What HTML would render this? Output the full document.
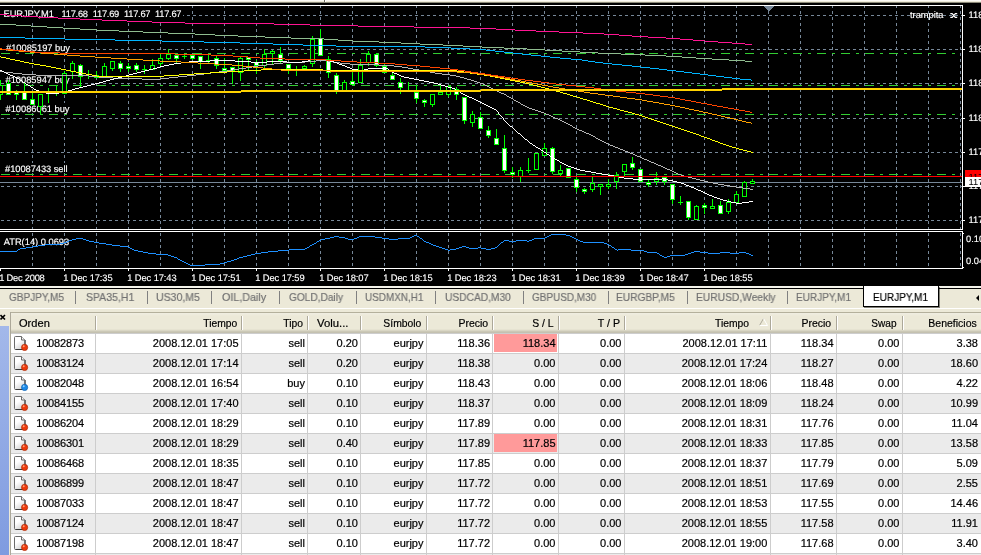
<!DOCTYPE html>
<html><head><meta charset="utf-8"><title>EURJPY,M1</title>
<style>
html,body{margin:0;padding:0}
body{width:981px;height:555px;overflow:hidden;position:relative;background:#ece9d8;font-family:"Liberation Sans",sans-serif;font-size:11px;color:#000}
.tabs{position:absolute;left:0;top:289px;width:981px;height:19px;background:#ece9d8}
.tb{position:absolute;top:1px;height:19px;line-height:14px;color:#727272;-webkit-text-stroke:0.2px #727272;white-space:nowrap;transform-origin:0 0;will-change:transform}
.sp{position:absolute;top:2px;width:1px;height:13px;background:#808080}
.act{position:absolute;left:863px;top:-3px;width:74px;height:20px;background:#fff;border:1px solid #000;border-top:none;box-sizing:content-box;box-shadow:1px 1px 0 rgba(0,0,0,.45)}
.act .tb{top:4px;will-change:transform}
.arr{position:absolute;left:975.5px;top:5.5px;width:0;height:0;border-top:3.5px solid transparent;border-bottom:3.5px solid transparent;border-right:3.5px solid #000}
.hl{position:absolute;left:0;top:308px;width:981px;height:1px;background:#fff}
.side{position:absolute;left:0;top:326px;width:9px;height:229px;background:linear-gradient(#a3b8ea,#7f9be0)}
.cx{position:absolute;left:0;top:314px;width:7px;height:7px;line-height:0}
.hd{position:absolute;left:10px;top:312px;width:971px;height:21px;background:linear-gradient(#b4b09c 0,#b4b09c 1px,#f0eee2 1px,#ece9d8 4px,#ece9d8 17px,#e0ddcb 18px,#d2cfbd 19px,#c4c1b0 20px,#c4c1b0 21px)}
.hd span{position:absolute;top:0;line-height:22px;white-space:nowrap;-webkit-text-stroke:0.2px #000}
.hd i{position:absolute;top:4px;width:1px;height:14px;background:#aca899;box-shadow:1px 0 0 #fff}
.rw{position:absolute;left:11px;width:970px;height:20px;box-sizing:border-box;border-top:1px solid #cdcdcd}
.rw span{position:absolute;top:0;line-height:18px;white-space:nowrap;-webkit-text-stroke:0.2px #000}
.ic{position:absolute;left:3px;top:1px}
.pk{position:absolute;left:483px;top:0;width:63px;height:18px;background:#ff9a9a}
.cl{position:absolute;top:333px;width:1px;height:222px;background:#cdcdcd}
.lb{position:absolute;left:10px;top:312px;width:1px;height:243px;background:#aca899}
</style></head><body>
<svg width="981" height="289" viewBox="0 0 981 289" shape-rendering="crispEdges" style="position:absolute;left:0;top:0;will-change:transform;font-family:'Liberation Sans',sans-serif;font-size:9.33px">
<rect x="0" y="0" width="981" height="1" fill="#fbfaf5"/><rect x="0" y="1" width="981" height="1" fill="#ece9d8"/><rect x="0" y="2" width="981" height="1" fill="#8a8878"/>
<rect x="324" y="0" width="1" height="2" fill="#6b6a60"/><rect x="325" y="0" width="1" height="2" fill="#fff"/>
<rect x="0" y="3" width="981" height="283" fill="#000"/>
<rect x="0" y="286" width="981" height="2" fill="#f4f3ea"/>
<rect x="0" y="288" width="981" height="1" fill="#000"/>
<path d="M32.5 5V268M64.5 5V268M96.5 5V268M128.5 5V268M160.5 5V268M192.5 5V268M224.5 5V268M256.5 5V268M288.5 5V268M320.5 5V268M352.5 5V268M384.5 5V268M416.5 5V268M448.5 5V268M480.5 5V268M512.5 5V268M544.5 5V268M576.5 5V268M608.5 5V268M640.5 5V268M672.5 5V268M704.5 5V268M736.5 5V268M768.5 5V268M800.5 5V268M832.5 5V268M864.5 5V268M896.5 5V268M928.5 5V268M960.5 5V268" stroke="#778899" stroke-width="1" stroke-dasharray="3 3" fill="none"/>
<path d="M1 15.5H962M1 49.5H962M1 83.5H962M1 118.5H962M1 152.5H962M1 186.5H962M1 220.5H962" stroke="#778899" stroke-width="1" stroke-dasharray="3 3" fill="none"/>
<path d="M764 6h10l-5 6z" fill="#778899"/>
<path d="M1 53.5H960M1 85.5H960M1 114.5H960M1 174.5H960" stroke="#32cd32" stroke-width="1" stroke-dasharray="9 6 3 6" fill="none"/>
<rect x="0" y="182" width="962" height="1" fill="#778899"/>
<rect x="0" y="9" width="183" height="11" fill="#000"/>
<rect x="4" y="42" width="68" height="10" fill="#000"/>
<rect x="4" y="74" width="68" height="10" fill="#000"/>
<rect x="4" y="103" width="68" height="10" fill="#000"/>
<rect x="4" y="163" width="66" height="10" fill="#000"/>
<g fill="#fff" stroke="#fff" stroke-width="0.15" shape-rendering="auto" text-rendering="geometricPrecision">
<text x="3.5" y="17" textLength="50.5">EURJPY,M1</text>
<text x="61.5" y="17" textLength="26.5">117.68</text>
<text x="92.8" y="17" textLength="26.5">117.69</text>
<text x="124.0" y="17" textLength="26.5">117.67</text>
<text x="155.0" y="17" textLength="26.5">117.67</text>
<text x="6" y="50.5" textLength="64">#10085197 buy</text>
<text x="5.5" y="82.9" textLength="64">#10085947 buy</text>
<text x="5.5" y="111.8" textLength="64">#10086061 buy</text>
<text x="5" y="171.5" textLength="62.5">#10087433 sell</text>
</g>
<rect x="0" y="80" width="1" height="20" fill="#00ff00"/>
<rect x="-2" y="85" width="5" height="10" fill="#00ff00"/>
<rect x="-1" y="86" width="3" height="8" fill="#000"/>
<rect x="8" y="80" width="1" height="15" fill="#00ff00"/>
<rect x="6" y="83" width="5" height="12" fill="#00ff00"/>
<rect x="7" y="84" width="3" height="10" fill="#fff"/>
<rect x="16" y="90" width="1" height="10" fill="#00ff00"/>
<rect x="14" y="92" width="5" height="3" fill="#00ff00"/>
<rect x="15" y="93" width="3" height="1" fill="#fff"/>
<rect x="24" y="82" width="1" height="18" fill="#00ff00"/>
<rect x="22" y="92" width="5" height="8" fill="#00ff00"/>
<rect x="23" y="93" width="3" height="6" fill="#fff"/>
<rect x="32" y="93" width="1" height="12" fill="#00ff00"/>
<rect x="30" y="99" width="5" height="6" fill="#00ff00"/>
<rect x="31" y="100" width="3" height="4" fill="#fff"/>
<rect x="40" y="94" width="1" height="20" fill="#00ff00"/>
<rect x="38" y="94" width="5" height="13" fill="#00ff00"/>
<rect x="39" y="95" width="3" height="11" fill="#000"/>
<rect x="48" y="88" width="1" height="15" fill="#00ff00"/>
<rect x="46" y="92" width="5" height="1" fill="#00ff00"/>
<rect x="56" y="85" width="1" height="11" fill="#00ff00"/>
<rect x="54" y="91" width="5" height="3" fill="#00ff00"/>
<rect x="55" y="92" width="3" height="1" fill="#000"/>
<rect x="64" y="71" width="1" height="23" fill="#00ff00"/>
<rect x="62" y="73" width="5" height="21" fill="#00ff00"/>
<rect x="63" y="74" width="3" height="19" fill="#000"/>
<rect x="72" y="61" width="1" height="18" fill="#00ff00"/>
<rect x="70" y="63" width="5" height="9" fill="#00ff00"/>
<rect x="71" y="64" width="3" height="7" fill="#000"/>
<rect x="80" y="64" width="1" height="24" fill="#00ff00"/>
<rect x="78" y="65" width="5" height="12" fill="#00ff00"/>
<rect x="79" y="66" width="3" height="10" fill="#fff"/>
<rect x="88" y="70" width="1" height="9" fill="#00ff00"/>
<rect x="86" y="74" width="5" height="1" fill="#00ff00"/>
<rect x="96" y="71" width="1" height="7" fill="#00ff00"/>
<rect x="94" y="75" width="5" height="3" fill="#00ff00"/>
<rect x="95" y="76" width="3" height="1" fill="#fff"/>
<rect x="104" y="63" width="1" height="14" fill="#00ff00"/>
<rect x="102" y="66" width="5" height="11" fill="#00ff00"/>
<rect x="103" y="67" width="3" height="9" fill="#000"/>
<rect x="112" y="61" width="1" height="10" fill="#00ff00"/>
<rect x="110" y="61" width="5" height="8" fill="#00ff00"/>
<rect x="111" y="62" width="3" height="6" fill="#000"/>
<rect x="120" y="61" width="1" height="11" fill="#00ff00"/>
<rect x="118" y="63" width="5" height="6" fill="#00ff00"/>
<rect x="119" y="64" width="3" height="4" fill="#fff"/>
<rect x="128" y="63" width="1" height="9" fill="#00ff00"/>
<rect x="126" y="66" width="5" height="3" fill="#00ff00"/>
<rect x="127" y="67" width="3" height="1" fill="#fff"/>
<rect x="136" y="63" width="1" height="9" fill="#00ff00"/>
<rect x="134" y="65" width="5" height="5" fill="#00ff00"/>
<rect x="135" y="66" width="3" height="3" fill="#fff"/>
<rect x="144" y="65" width="1" height="9" fill="#00ff00"/>
<rect x="142" y="69" width="5" height="1" fill="#00ff00"/>
<rect x="152" y="59" width="1" height="11" fill="#00ff00"/>
<rect x="150" y="65" width="5" height="5" fill="#00ff00"/>
<rect x="151" y="66" width="3" height="3" fill="#000"/>
<rect x="160" y="53" width="1" height="13" fill="#00ff00"/>
<rect x="158" y="58" width="5" height="6" fill="#00ff00"/>
<rect x="159" y="59" width="3" height="4" fill="#000"/>
<rect x="168" y="49" width="1" height="11" fill="#00ff00"/>
<rect x="166" y="54" width="5" height="5" fill="#00ff00"/>
<rect x="167" y="55" width="3" height="3" fill="#000"/>
<rect x="176" y="54" width="1" height="10" fill="#00ff00"/>
<rect x="174" y="55" width="5" height="4" fill="#00ff00"/>
<rect x="175" y="56" width="3" height="2" fill="#fff"/>
<rect x="184" y="54" width="1" height="5" fill="#00ff00"/>
<rect x="182" y="56" width="5" height="1" fill="#00ff00"/>
<rect x="192" y="54" width="1" height="6" fill="#00ff00"/>
<rect x="190" y="55" width="5" height="4" fill="#00ff00"/>
<rect x="191" y="56" width="3" height="2" fill="#fff"/>
<rect x="200" y="56" width="1" height="13" fill="#00ff00"/>
<rect x="198" y="56" width="5" height="6" fill="#00ff00"/>
<rect x="199" y="57" width="3" height="4" fill="#fff"/>
<rect x="208" y="54" width="1" height="9" fill="#00ff00"/>
<rect x="206" y="60" width="5" height="1" fill="#00ff00"/>
<rect x="216" y="56" width="1" height="13" fill="#00ff00"/>
<rect x="214" y="58" width="5" height="8" fill="#00ff00"/>
<rect x="215" y="59" width="3" height="6" fill="#fff"/>
<rect x="224" y="58" width="1" height="15" fill="#00ff00"/>
<rect x="222" y="68" width="5" height="3" fill="#00ff00"/>
<rect x="223" y="69" width="3" height="1" fill="#fff"/>
<rect x="232" y="67" width="1" height="17" fill="#00ff00"/>
<rect x="230" y="67" width="5" height="4" fill="#00ff00"/>
<rect x="231" y="68" width="3" height="2" fill="#fff"/>
<rect x="240" y="57" width="1" height="24" fill="#00ff00"/>
<rect x="238" y="58" width="5" height="15" fill="#00ff00"/>
<rect x="239" y="59" width="3" height="13" fill="#000"/>
<rect x="248" y="57" width="1" height="14" fill="#00ff00"/>
<rect x="246" y="57" width="5" height="3" fill="#00ff00"/>
<rect x="247" y="58" width="3" height="1" fill="#fff"/>
<rect x="256" y="60" width="1" height="14" fill="#00ff00"/>
<rect x="254" y="62" width="5" height="4" fill="#00ff00"/>
<rect x="255" y="63" width="3" height="2" fill="#fff"/>
<rect x="264" y="49" width="1" height="19" fill="#00ff00"/>
<rect x="262" y="54" width="5" height="12" fill="#00ff00"/>
<rect x="263" y="55" width="3" height="10" fill="#000"/>
<rect x="272" y="50" width="1" height="14" fill="#00ff00"/>
<rect x="270" y="51" width="5" height="3" fill="#00ff00"/>
<rect x="271" y="52" width="3" height="1" fill="#000"/>
<rect x="280" y="47" width="1" height="16" fill="#00ff00"/>
<rect x="278" y="54" width="5" height="7" fill="#00ff00"/>
<rect x="279" y="55" width="3" height="5" fill="#fff"/>
<rect x="288" y="64" width="1" height="10" fill="#00ff00"/>
<rect x="286" y="64" width="5" height="5" fill="#00ff00"/>
<rect x="287" y="65" width="3" height="3" fill="#fff"/>
<rect x="296" y="66" width="1" height="10" fill="#00ff00"/>
<rect x="294" y="70" width="5" height="1" fill="#00ff00"/>
<rect x="304" y="65" width="1" height="5" fill="#00ff00"/>
<rect x="302" y="66" width="5" height="3" fill="#00ff00"/>
<rect x="303" y="67" width="3" height="1" fill="#000"/>
<rect x="312" y="36" width="1" height="31" fill="#00ff00"/>
<rect x="310" y="39" width="5" height="25" fill="#00ff00"/>
<rect x="311" y="40" width="3" height="23" fill="#000"/>
<rect x="320" y="29" width="1" height="27" fill="#00ff00"/>
<rect x="318" y="38" width="5" height="18" fill="#00ff00"/>
<rect x="319" y="39" width="3" height="16" fill="#fff"/>
<rect x="328" y="56" width="1" height="22" fill="#00ff00"/>
<rect x="326" y="59" width="5" height="14" fill="#00ff00"/>
<rect x="327" y="60" width="3" height="12" fill="#fff"/>
<rect x="336" y="73" width="1" height="21" fill="#00ff00"/>
<rect x="334" y="75" width="5" height="16" fill="#00ff00"/>
<rect x="335" y="76" width="3" height="14" fill="#fff"/>
<rect x="344" y="80" width="1" height="12" fill="#00ff00"/>
<rect x="342" y="82" width="5" height="10" fill="#00ff00"/>
<rect x="343" y="83" width="3" height="8" fill="#000"/>
<rect x="352" y="69" width="1" height="16" fill="#00ff00"/>
<rect x="350" y="81" width="5" height="4" fill="#00ff00"/>
<rect x="351" y="82" width="3" height="2" fill="#fff"/>
<rect x="360" y="59" width="1" height="24" fill="#00ff00"/>
<rect x="358" y="65" width="5" height="18" fill="#00ff00"/>
<rect x="359" y="66" width="3" height="16" fill="#000"/>
<rect x="368" y="51" width="1" height="15" fill="#00ff00"/>
<rect x="366" y="54" width="5" height="9" fill="#00ff00"/>
<rect x="367" y="55" width="3" height="7" fill="#000"/>
<rect x="376" y="53" width="1" height="14" fill="#00ff00"/>
<rect x="374" y="54" width="5" height="12" fill="#00ff00"/>
<rect x="375" y="55" width="3" height="10" fill="#fff"/>
<rect x="384" y="63" width="1" height="10" fill="#00ff00"/>
<rect x="382" y="66" width="5" height="7" fill="#00ff00"/>
<rect x="383" y="67" width="3" height="5" fill="#fff"/>
<rect x="392" y="72" width="1" height="8" fill="#00ff00"/>
<rect x="390" y="75" width="5" height="5" fill="#00ff00"/>
<rect x="391" y="76" width="3" height="3" fill="#fff"/>
<rect x="400" y="78" width="1" height="16" fill="#00ff00"/>
<rect x="398" y="82" width="5" height="6" fill="#00ff00"/>
<rect x="399" y="83" width="3" height="4" fill="#fff"/>
<rect x="408" y="82" width="1" height="10" fill="#00ff00"/>
<rect x="406" y="91" width="5" height="1" fill="#00ff00"/>
<rect x="416" y="85" width="1" height="18" fill="#00ff00"/>
<rect x="414" y="92" width="5" height="7" fill="#00ff00"/>
<rect x="415" y="93" width="3" height="5" fill="#fff"/>
<rect x="424" y="99" width="1" height="8" fill="#00ff00"/>
<rect x="422" y="100" width="5" height="3" fill="#00ff00"/>
<rect x="423" y="101" width="3" height="1" fill="#fff"/>
<rect x="432" y="94" width="1" height="13" fill="#00ff00"/>
<rect x="430" y="94" width="5" height="11" fill="#00ff00"/>
<rect x="431" y="95" width="3" height="9" fill="#000"/>
<rect x="440" y="86" width="1" height="9" fill="#00ff00"/>
<rect x="438" y="92" width="5" height="3" fill="#00ff00"/>
<rect x="439" y="93" width="3" height="1" fill="#000"/>
<rect x="448" y="86" width="1" height="11" fill="#00ff00"/>
<rect x="446" y="86" width="5" height="9" fill="#00ff00"/>
<rect x="447" y="87" width="3" height="7" fill="#000"/>
<rect x="456" y="87" width="1" height="13" fill="#00ff00"/>
<rect x="454" y="89" width="5" height="6" fill="#00ff00"/>
<rect x="455" y="90" width="3" height="4" fill="#fff"/>
<rect x="464" y="97" width="1" height="27" fill="#00ff00"/>
<rect x="462" y="97" width="5" height="24" fill="#00ff00"/>
<rect x="463" y="98" width="3" height="22" fill="#fff"/>
<rect x="472" y="111" width="1" height="16" fill="#00ff00"/>
<rect x="470" y="114" width="5" height="9" fill="#00ff00"/>
<rect x="471" y="115" width="3" height="7" fill="#000"/>
<rect x="480" y="112" width="1" height="17" fill="#00ff00"/>
<rect x="478" y="117" width="5" height="12" fill="#00ff00"/>
<rect x="479" y="118" width="3" height="10" fill="#fff"/>
<rect x="488" y="126" width="1" height="12" fill="#00ff00"/>
<rect x="486" y="130" width="5" height="6" fill="#00ff00"/>
<rect x="487" y="131" width="3" height="4" fill="#fff"/>
<rect x="496" y="129" width="1" height="16" fill="#00ff00"/>
<rect x="494" y="138" width="5" height="7" fill="#00ff00"/>
<rect x="495" y="139" width="3" height="5" fill="#fff"/>
<rect x="504" y="135" width="1" height="38" fill="#00ff00"/>
<rect x="502" y="148" width="5" height="23" fill="#00ff00"/>
<rect x="503" y="149" width="3" height="21" fill="#fff"/>
<rect x="512" y="167" width="1" height="11" fill="#00ff00"/>
<rect x="510" y="172" width="5" height="3" fill="#00ff00"/>
<rect x="511" y="173" width="3" height="1" fill="#fff"/>
<rect x="520" y="167" width="1" height="15" fill="#00ff00"/>
<rect x="518" y="170" width="5" height="7" fill="#00ff00"/>
<rect x="519" y="171" width="3" height="5" fill="#000"/>
<rect x="528" y="158" width="1" height="15" fill="#00ff00"/>
<rect x="526" y="170" width="5" height="1" fill="#00ff00"/>
<rect x="536" y="153" width="1" height="17" fill="#00ff00"/>
<rect x="534" y="153" width="5" height="17" fill="#00ff00"/>
<rect x="535" y="154" width="3" height="15" fill="#000"/>
<rect x="544" y="143" width="1" height="13" fill="#00ff00"/>
<rect x="542" y="148" width="5" height="8" fill="#00ff00"/>
<rect x="543" y="149" width="3" height="6" fill="#000"/>
<rect x="552" y="147" width="1" height="27" fill="#00ff00"/>
<rect x="550" y="148" width="5" height="24" fill="#00ff00"/>
<rect x="551" y="149" width="3" height="22" fill="#fff"/>
<rect x="560" y="165" width="1" height="12" fill="#00ff00"/>
<rect x="558" y="170" width="5" height="4" fill="#00ff00"/>
<rect x="559" y="171" width="3" height="2" fill="#000"/>
<rect x="568" y="168" width="1" height="10" fill="#00ff00"/>
<rect x="566" y="168" width="5" height="10" fill="#00ff00"/>
<rect x="567" y="169" width="3" height="8" fill="#fff"/>
<rect x="576" y="177" width="1" height="15" fill="#00ff00"/>
<rect x="574" y="179" width="5" height="9" fill="#00ff00"/>
<rect x="575" y="180" width="3" height="7" fill="#fff"/>
<rect x="584" y="188" width="1" height="6" fill="#00ff00"/>
<rect x="582" y="189" width="5" height="3" fill="#00ff00"/>
<rect x="583" y="190" width="3" height="1" fill="#fff"/>
<rect x="592" y="177" width="1" height="15" fill="#00ff00"/>
<rect x="590" y="183" width="5" height="7" fill="#00ff00"/>
<rect x="591" y="184" width="3" height="5" fill="#000"/>
<rect x="600" y="184" width="1" height="11" fill="#00ff00"/>
<rect x="598" y="184" width="5" height="3" fill="#00ff00"/>
<rect x="599" y="185" width="3" height="1" fill="#000"/>
<rect x="608" y="179" width="1" height="10" fill="#00ff00"/>
<rect x="606" y="184" width="5" height="3" fill="#00ff00"/>
<rect x="607" y="185" width="3" height="1" fill="#000"/>
<rect x="616" y="172" width="1" height="17" fill="#00ff00"/>
<rect x="614" y="175" width="5" height="7" fill="#00ff00"/>
<rect x="615" y="176" width="3" height="5" fill="#000"/>
<rect x="624" y="164" width="1" height="13" fill="#00ff00"/>
<rect x="622" y="164" width="5" height="8" fill="#00ff00"/>
<rect x="623" y="165" width="3" height="6" fill="#000"/>
<rect x="632" y="157" width="1" height="13" fill="#00ff00"/>
<rect x="630" y="163" width="5" height="5" fill="#00ff00"/>
<rect x="631" y="164" width="3" height="3" fill="#fff"/>
<rect x="640" y="169" width="1" height="13" fill="#00ff00"/>
<rect x="638" y="169" width="5" height="13" fill="#00ff00"/>
<rect x="639" y="170" width="3" height="11" fill="#fff"/>
<rect x="648" y="179" width="1" height="8" fill="#00ff00"/>
<rect x="646" y="182" width="5" height="3" fill="#00ff00"/>
<rect x="647" y="183" width="3" height="1" fill="#fff"/>
<rect x="656" y="172" width="1" height="13" fill="#00ff00"/>
<rect x="654" y="178" width="5" height="4" fill="#00ff00"/>
<rect x="655" y="179" width="3" height="2" fill="#000"/>
<rect x="664" y="177" width="1" height="8" fill="#00ff00"/>
<rect x="662" y="177" width="5" height="5" fill="#00ff00"/>
<rect x="663" y="178" width="3" height="3" fill="#fff"/>
<rect x="672" y="184" width="1" height="20" fill="#00ff00"/>
<rect x="670" y="184" width="5" height="16" fill="#00ff00"/>
<rect x="671" y="185" width="3" height="14" fill="#fff"/>
<rect x="680" y="196" width="1" height="9" fill="#00ff00"/>
<rect x="678" y="202" width="5" height="1" fill="#00ff00"/>
<rect x="688" y="201" width="1" height="19" fill="#00ff00"/>
<rect x="686" y="201" width="5" height="17" fill="#00ff00"/>
<rect x="687" y="202" width="3" height="15" fill="#fff"/>
<rect x="696" y="205" width="1" height="15" fill="#00ff00"/>
<rect x="694" y="206" width="5" height="14" fill="#00ff00"/>
<rect x="695" y="207" width="3" height="12" fill="#000"/>
<rect x="704" y="203" width="1" height="11" fill="#00ff00"/>
<rect x="702" y="205" width="5" height="3" fill="#00ff00"/>
<rect x="703" y="206" width="3" height="1" fill="#fff"/>
<rect x="712" y="199" width="1" height="9" fill="#00ff00"/>
<rect x="710" y="206" width="5" height="3" fill="#00ff00"/>
<rect x="711" y="207" width="3" height="1" fill="#000"/>
<rect x="720" y="201" width="1" height="13" fill="#00ff00"/>
<rect x="718" y="205" width="5" height="9" fill="#00ff00"/>
<rect x="719" y="206" width="3" height="7" fill="#fff"/>
<rect x="728" y="199" width="1" height="15" fill="#00ff00"/>
<rect x="726" y="202" width="5" height="10" fill="#00ff00"/>
<rect x="727" y="203" width="3" height="8" fill="#000"/>
<rect x="736" y="191" width="1" height="12" fill="#00ff00"/>
<rect x="734" y="194" width="5" height="9" fill="#00ff00"/>
<rect x="735" y="195" width="3" height="7" fill="#000"/>
<rect x="744" y="181" width="1" height="16" fill="#00ff00"/>
<rect x="742" y="182" width="5" height="15" fill="#00ff00"/>
<rect x="743" y="183" width="3" height="13" fill="#000"/>
<rect x="752" y="179" width="1" height="4" fill="#00ff00"/>
<rect x="750" y="181" width="5" height="3" fill="#00ff00"/>
<rect x="751" y="182" width="3" height="1" fill="#000"/>
<path d="M0 14h7v1h-7zM7 15h15v1h-15zM22 16h16v1h-16zM38 17h20v1h-20zM58 18h22v1h-22zM80 19h22v1h-22zM102 20h25v1h-25zM127 21h25v1h-25zM152 22h33v1h-33zM185 23h89v1h-89zM274 24h36v1h-36zM310 25h48v1h-48zM358 26h56v1h-56zM414 27h56v1h-56zM470 28h26v1h-26zM496 29h19v1h-19zM515 30h21v1h-21zM536 31h23v1h-23zM559 32h24v1h-24zM583 33h21v1h-21zM604 34h15v1h-15zM619 35h13v1h-13zM632 36h16v1h-16zM648 37h18v1h-18zM666 38h14v1h-14zM680 39h13v1h-13zM693 40h12v1h-12zM705 41h13v1h-13zM718 42h14v1h-14zM732 43h13v1h-13zM745 44h7v1h-7z" fill="#ff1493"/>
<path d="M0 24h16v1h-16zM16 25h15v1h-15zM31 26h16v1h-16zM47 27h16v1h-16zM63 28h17v1h-17zM80 29h17v1h-17zM97 30h22v1h-22zM119 31h24v1h-24zM143 32h25v1h-25zM168 33h27v1h-27zM195 34h20v1h-20zM215 35h23v1h-23zM238 36h27v1h-27zM265 37h26v1h-26zM291 38h33v1h-33zM324 39h14v1h-14zM338 40h15v1h-15zM353 41h26v1h-26zM379 42h22v1h-22zM401 43h19v1h-19zM420 44h23v1h-23zM443 45h20v1h-20zM463 46h19v1h-19zM482 47h22v1h-22zM504 48h23v1h-23zM527 49h18v1h-18zM545 50h17v1h-17zM562 51h18v1h-18zM580 52h18v1h-18zM598 53h23v1h-23zM621 54h24v1h-24zM645 55h21v1h-21zM666 56h16v1h-16zM682 57h14v1h-14zM696 58h16v1h-16zM712 59h17v1h-17zM729 60h16v1h-16zM745 61h7v1h-7z" fill="#8fbc8f"/>
<path d="M0 37h25v1h-25zM25 38h40v1h-40zM65 39h50v1h-50zM115 40h47v1h-47zM162 41h42v1h-42zM204 42h36v1h-36zM240 43h33v1h-33zM273 44h30v1h-30zM303 45h33v1h-33zM336 46h89v1h-89zM425 47h26v1h-26zM451 48h19v1h-19zM470 49h16v1h-16zM486 50h9v1h-9zM495 51h9v1h-9zM504 52h9v1h-9zM513 53h9v1h-9zM522 54h9v1h-9zM531 55h10v1h-10zM541 56h9v1h-9zM550 57h10v1h-10zM560 58h11v1h-11zM571 59h11v1h-11zM582 60h6v1h-6zM588 61h7v1h-7zM595 62h8v1h-8zM603 63h9v1h-9zM612 64h10v1h-10zM622 65h10v1h-10zM632 66h9v1h-9zM641 67h9v1h-9zM650 68h9v1h-9zM659 69h8v1h-8zM667 70h9v1h-9zM676 71h8v1h-8zM684 72h8v1h-8zM692 73h8v1h-8zM700 74h8v1h-8zM708 75h8v1h-8zM716 76h8v1h-8zM724 77h8v1h-8zM732 78h8v1h-8zM740 79h11v1h-11zM751 80h1v1h-1z" fill="#00b4ff"/>
<path d="M0 71h4v1h-4zM4 72h9v1h-9zM13 73h9v1h-9zM22 74h14v1h-14zM36 75h53v1h-53zM89 76h10v1h-10zM99 77h14v1h-14zM113 78h29v1h-29zM142 79h18v1h-18zM160 78h9v1h-9zM169 77h9v1h-9zM178 76h9v1h-9zM187 75h9v1h-9zM196 74h8v1h-8zM204 73h7v1h-7zM211 72h8v1h-8zM219 71h8v1h-8zM227 70h6v1h-6zM233 69h6v1h-6zM239 68h7v1h-7zM246 67h6v1h-6zM252 66h6v1h-6zM258 65h8v1h-8zM266 64h8v1h-8zM274 63h9v1h-9zM283 62h22v1h-22zM305 61h11v1h-11zM316 60h12v1h-12zM328 61h5v1h-5zM333 62h7v1h-7zM340 63h10v1h-10zM350 64h29v1h-29zM379 65h15v1h-15zM394 66h8v1h-8zM402 67h6v1h-6zM408 68h5v1h-5zM413 69h6v1h-6zM419 70h5v1h-5zM424 71h6v1h-6zM430 72h5v1h-5zM435 73h7v1h-7zM442 74h8v1h-8zM450 75h6v1h-6zM456 76h4v1h-4zM460 77h4v1h-4zM464 78h3v1h-3zM467 79h4v1h-4zM471 80h3v1h-3zM474 81h3v1h-3zM477 82h3v1h-3zM480 83h3v1h-3zM483 84h2v1h-2zM485 85h2v1h-2zM487 86h2v1h-2zM489 87h2v1h-2zM491 88h2v1h-2zM493 89h2v1h-2zM495 90h2v1h-2zM497 91h2v1h-2zM499 92h2v1h-2zM501 93h3v1h-3zM504 94h2v1h-2zM506 95h1v1h-1zM507 96h2v1h-2zM509 97h2v1h-2zM511 98h2v1h-2zM513 99h1v1h-1zM514 100h2v1h-2zM516 101h2v1h-2zM518 102h2v1h-2zM520 103h1v1h-1zM521 104h2v1h-2zM523 105h2v1h-2zM525 106h2v1h-2zM527 107h2v1h-2zM529 108h3v1h-3zM532 109h3v1h-3zM535 110h3v1h-3zM538 111h3v1h-3zM541 112h3v1h-3zM544 113h2v1h-2zM546 114h3v1h-3zM549 115h2v1h-2zM551 116h2v1h-2zM553 117h2v1h-2zM555 118h3v1h-3zM558 119h2v1h-2zM560 120h2v1h-2zM562 121h2v1h-2zM564 122h2v1h-2zM566 123h2v1h-2zM568 124h2v1h-2zM570 125h2v1h-2zM572 126h1v1h-1zM573 127h2v1h-2zM575 128h2v1h-2zM577 129h2v1h-2zM579 130h3v1h-3zM582 131h2v1h-2zM584 132h2v1h-2zM586 133h3v1h-3zM589 134h2v1h-2zM591 135h2v1h-2zM593 136h2v1h-2zM595 137h1v1h-1zM596 138h2v1h-2zM598 139h2v1h-2zM600 140h2v1h-2zM602 141h2v1h-2zM604 142h2v1h-2zM606 143h2v1h-2zM608 144h2v1h-2zM610 145h3v1h-3zM613 146h2v1h-2zM615 147h3v1h-3zM618 148h2v1h-2zM620 149h3v1h-3zM623 150h2v1h-2zM625 151h3v1h-3zM628 152h2v1h-2zM630 153h3v1h-3zM633 154h2v1h-2zM635 155h2v1h-2zM637 156h3v1h-3zM640 157h2v1h-2zM642 158h2v1h-2zM644 159h3v1h-3zM647 160h2v1h-2zM649 161h2v1h-2zM651 162h3v1h-3zM654 163h2v1h-2zM656 164h2v1h-2zM658 165h3v1h-3zM661 166h2v1h-2zM663 167h2v1h-2zM665 168h2v1h-2zM667 169h3v1h-3zM670 170h2v1h-2zM672 171h2v1h-2zM674 172h2v1h-2zM676 173h2v1h-2zM678 174h3v1h-3zM681 175h3v1h-3zM684 176h4v1h-4zM688 177h4v1h-4zM692 178h4v1h-4zM696 179h4v1h-4zM700 180h4v1h-4zM704 181h4v1h-4zM708 182h5v1h-5zM713 183h5v1h-5zM718 184h6v1h-6zM724 185h6v1h-6zM730 186h6v1h-6zM736 187h7v1h-7zM743 188h7v1h-7zM750 189h3v1h-3z" fill="#b4b4b4"/>
<path d="M0 70h2v1h-2zM2 71h2v1h-2zM4 72h2v1h-2zM6 73h2v1h-2zM8 74h2v1h-2zM10 75h3v1h-3zM13 76h2v1h-2zM15 77h2v1h-2zM17 78h2v1h-2zM19 79h1v1h-1zM20 80h2v1h-2zM22 81h1v1h-1zM23 82h2v1h-2zM25 83h1v1h-1zM26 84h2v1h-2zM28 85h2v1h-2zM30 86h1v1h-1zM31 87h2v1h-2zM33 88h1v1h-1zM34 89h2v1h-2zM36 90h3v1h-3zM39 91h3v1h-3zM42 92h4v1h-4zM46 93h13v1h-13zM59 92h4v1h-4zM63 91h5v1h-5zM68 90h4v1h-4zM72 89h3v1h-3zM75 88h4v1h-4zM79 87h4v1h-4zM83 86h4v1h-4zM87 85h4v1h-4zM91 84h4v1h-4zM95 83h4v1h-4zM99 82h4v1h-4zM103 81h3v1h-3zM106 80h4v1h-4zM110 79h4v1h-4zM114 78h4v1h-4zM118 77h4v1h-4zM122 76h4v1h-4zM126 75h3v1h-3zM129 74h4v1h-4zM133 73h4v1h-4zM137 72h4v1h-4zM141 71h4v1h-4zM145 70h4v1h-4zM149 69h4v1h-4zM153 68h4v1h-4zM157 67h3v1h-3zM160 66h4v1h-4zM164 65h5v1h-5zM169 64h5v1h-5zM174 63h7v1h-7zM181 62h8v1h-8zM189 61h21v1h-21zM210 60h25v1h-25zM235 61h16v1h-16zM251 62h16v1h-16zM267 61h20v1h-20zM287 62h15v1h-15zM302 61h6v1h-6zM308 60h2v1h-2zM310 59h16v1h-16zM326 60h4v1h-4zM330 61h4v1h-4zM334 62h3v1h-3zM337 63h2v1h-2zM339 64h3v1h-3zM342 65h3v1h-3zM345 66h2v1h-2zM347 67h3v1h-3zM350 68h2v1h-2zM352 69h6v1h-6zM358 70h6v1h-6zM364 69h4v1h-4zM368 68h20v1h-20zM388 69h1v1h-1zM389 70h2v1h-2zM391 71h1v1h-1zM392 72h2v1h-2zM394 73h3v1h-3zM397 74h2v1h-2zM399 75h2v1h-2zM401 76h3v1h-3zM404 77h5v1h-5zM409 78h5v1h-5zM414 79h5v1h-5zM419 80h5v1h-5zM424 81h5v1h-5zM429 82h5v1h-5zM434 83h4v1h-4zM438 84h3v1h-3zM441 85h4v1h-4zM445 86h3v1h-3zM448 87h4v1h-4zM452 88h3v1h-3zM455 89h1v1h-1zM456 90h2v1h-2zM458 91h2v1h-2zM460 92h1v1h-1zM461 93h2v1h-2zM463 94h2v1h-2zM465 95h2v1h-2zM467 96h2v1h-2zM469 97h3v1h-3zM472 98h2v1h-2zM474 99h2v1h-2zM476 100h2v1h-2zM478 101h2v1h-2zM480 102h2v1h-2zM482 103h2v1h-2zM484 104h2v1h-2zM486 105h2v1h-2zM488 106h2v1h-2zM490 107h2v1h-2zM492 108h2v1h-2zM494 109h2v1h-2zM496 110h1v1h-1zM497 111h1v1h-1zM498 112h1v2h-1zM499 114h1v1h-1zM500 115h1v1h-1zM501 116h1v1h-1zM502 117h1v1h-1zM503 118h1v2h-1zM504 120h1v1h-1zM505 121h1v1h-1zM506 122h1v1h-1zM507 123h1v1h-1zM508 124h1v1h-1zM509 125h1v1h-1zM510 126h2v1h-2zM512 127h1v1h-1zM513 128h1v1h-1zM514 129h1v1h-1zM515 130h1v1h-1zM516 131h1v1h-1zM517 132h1v1h-1zM518 133h2v1h-2zM520 134h1v1h-1zM521 135h1v1h-1zM522 136h1v1h-1zM523 137h1v1h-1zM524 138h1v1h-1zM525 139h2v1h-2zM527 140h1v1h-1zM528 141h1v1h-1zM529 142h1v1h-1zM530 143h2v1h-2zM532 144h1v1h-1zM533 145h2v1h-2zM535 146h1v1h-1zM536 147h2v1h-2zM538 148h2v1h-2zM540 149h1v1h-1zM541 150h2v1h-2zM543 151h1v1h-1zM544 152h2v1h-2zM546 153h1v1h-1zM547 154h2v1h-2zM549 155h1v1h-1zM550 156h2v1h-2zM552 157h1v1h-1zM553 158h2v1h-2zM555 159h2v1h-2zM557 160h2v1h-2zM559 161h1v1h-1zM560 162h2v1h-2zM562 163h2v1h-2zM564 164h2v1h-2zM566 165h2v1h-2zM568 166h3v1h-3zM571 167h3v1h-3zM574 168h3v1h-3zM577 169h3v1h-3zM580 170h5v1h-5zM585 171h6v1h-6zM591 172h5v1h-5zM596 173h6v1h-6zM602 174h6v1h-6zM608 175h6v1h-6zM614 176h5v1h-5zM619 177h5v1h-5zM624 178h9v1h-9zM633 179h29v1h-29zM662 178h2v1h-2zM664 179h4v1h-4zM668 180h5v1h-5zM673 181h4v1h-4zM677 182h4v1h-4zM681 183h3v1h-3zM684 184h2v1h-2zM686 185h3v1h-3zM689 186h2v1h-2zM691 187h3v1h-3zM694 188h2v1h-2zM696 189h2v1h-2zM698 190h3v1h-3zM701 191h2v1h-2zM703 192h2v1h-2zM705 193h2v1h-2zM707 194h2v1h-2zM709 195h3v1h-3zM712 196h2v1h-2zM714 197h3v1h-3zM717 198h3v1h-3zM720 199h3v1h-3zM723 200h4v1h-4zM727 201h4v1h-4zM731 202h5v1h-5zM736 203h6v1h-6zM742 202h7v1h-7zM749 201h4v1h-4z" fill="#ffffff"/>
<path d="M0 56h1v1h-1zM1 57h5v1h-5zM6 58h4v1h-4zM10 59h5v1h-5zM15 60h5v1h-5zM20 61h4v1h-4zM24 62h5v1h-5zM29 63h5v1h-5zM34 64h6v1h-6zM40 65h6v1h-6zM46 66h5v1h-5zM51 67h5v1h-5zM56 68h5v1h-5zM61 69h5v1h-5zM66 70h5v1h-5zM71 71h5v1h-5zM76 72h5v1h-5zM81 73h5v1h-5zM86 74h6v1h-6zM92 75h5v1h-5zM97 76h67v1h-67zM164 75h15v1h-15zM179 74h15v1h-15zM194 73h16v1h-16zM210 72h17v1h-17zM227 71h17v1h-17zM244 70h17v1h-17zM261 69h62v1h-62zM323 70h134v1h-134zM457 71h7v1h-7zM464 72h6v1h-6zM470 73h7v1h-7zM477 74h7v1h-7zM484 75h6v1h-6zM490 76h5v1h-5zM495 77h5v1h-5zM500 78h5v1h-5zM505 79h5v1h-5zM510 80h5v1h-5zM515 81h5v1h-5zM520 82h5v1h-5zM525 83h4v1h-4zM529 84h4v1h-4zM533 85h4v1h-4zM537 86h4v1h-4zM541 87h4v1h-4zM545 88h4v1h-4zM549 89h4v1h-4zM553 90h3v1h-3zM556 91h4v1h-4zM560 92h3v1h-3zM563 93h4v1h-4zM567 94h3v1h-3zM570 95h3v1h-3zM573 96h4v1h-4zM577 97h3v1h-3zM580 98h3v1h-3zM583 99h4v1h-4zM587 100h3v1h-3zM590 101h3v1h-3zM593 102h3v1h-3zM596 103h4v1h-4zM600 104h3v1h-3zM603 105h3v1h-3zM606 106h3v1h-3zM609 107h4v1h-4zM613 108h4v1h-4zM617 109h3v1h-3zM620 110h4v1h-4zM624 111h4v1h-4zM628 112h4v1h-4zM632 113h3v1h-3zM635 114h4v1h-4zM639 115h3v1h-3zM642 116h3v1h-3zM645 117h3v1h-3zM648 118h3v1h-3zM651 119h3v1h-3zM654 120h3v1h-3zM657 121h3v1h-3zM660 122h3v1h-3zM663 123h3v1h-3zM666 124h3v1h-3zM669 125h3v1h-3zM672 126h3v1h-3zM675 127h3v1h-3zM678 128h3v1h-3zM681 129h3v1h-3zM684 130h3v1h-3zM687 131h3v1h-3zM690 132h3v1h-3zM693 133h3v1h-3zM696 134h3v1h-3zM699 135h2v1h-2zM701 136h3v1h-3zM704 137h3v1h-3zM707 138h3v1h-3zM710 139h2v1h-2zM712 140h3v1h-3zM715 141h3v1h-3zM718 142h2v1h-2zM720 143h3v1h-3zM723 144h3v1h-3zM726 145h3v1h-3zM729 146h3v1h-3zM732 147h4v1h-4zM736 148h3v1h-3zM739 149h4v1h-4zM743 150h4v1h-4zM747 151h4v1h-4zM751 152h2v1h-2z" fill="#ffff00"/>
<path d="M0 49h8v1h-8zM8 50h11v1h-11zM19 51h11v1h-11zM30 52h11v1h-11zM41 53h13v1h-13zM54 54h13v1h-13zM67 55h13v1h-13zM80 56h15v1h-15zM95 57h16v1h-16zM111 58h16v1h-16zM127 59h16v1h-16zM143 60h17v1h-17zM160 61h21v1h-21zM181 62h17v1h-17zM198 63h17v1h-17zM215 64h17v1h-17zM232 65h11v1h-11zM243 66h10v1h-10zM253 67h10v1h-10zM263 68h9v1h-9zM272 69h9v1h-9zM281 70h49v1h-49zM330 71h127v1h-127zM457 72h15v1h-15zM472 73h7v1h-7zM479 74h8v1h-8zM487 75h6v1h-6zM493 76h5v1h-5zM498 77h6v1h-6zM504 78h6v1h-6zM510 79h5v1h-5zM515 80h6v1h-6zM521 81h5v1h-5zM526 82h6v1h-6zM532 83h5v1h-5zM537 84h5v1h-5zM542 85h6v1h-6zM548 86h5v1h-5zM553 87h6v1h-6zM559 88h6v1h-6zM565 89h6v1h-6zM571 90h7v1h-7zM578 91h6v1h-6zM584 92h6v1h-6zM590 93h8v1h-8zM598 94h7v1h-7zM605 95h8v1h-8zM613 96h7v1h-7zM620 97h7v1h-7zM627 98h8v1h-8zM635 99h7v1h-7zM642 100h5v1h-5zM647 101h6v1h-6zM653 102h6v1h-6zM659 103h5v1h-5zM664 104h6v1h-6zM670 105h5v1h-5zM675 106h5v1h-5zM680 107h5v1h-5zM685 108h4v1h-4zM689 109h5v1h-5zM694 110h5v1h-5zM699 111h4v1h-4zM703 112h5v1h-5zM708 113h4v1h-4zM712 114h5v1h-5zM717 115h4v1h-4zM721 116h4v1h-4zM725 117h5v1h-5zM730 118h4v1h-4zM734 119h4v1h-4zM738 120h4v1h-4zM742 121h4v1h-4zM746 122h5v1h-5zM751 123h1v1h-1z" fill="#ffa000"/>
<path d="M0 48h2v1h-2zM2 49h11v1h-11zM13 50h11v1h-11zM24 51h11v1h-11zM35 52h25v1h-25zM60 53h115v1h-115zM175 54h36v1h-36zM211 55h22v1h-22zM233 56h15v1h-15zM248 57h12v1h-12zM260 58h25v1h-25zM285 59h41v1h-41zM326 60h15v1h-15zM341 61h16v1h-16zM357 62h21v1h-21zM378 63h17v1h-17zM395 64h12v1h-12zM407 65h13v1h-13zM420 66h10v1h-10zM430 67h10v1h-10zM440 68h10v1h-10zM450 69h8v1h-8zM458 70h7v1h-7zM465 71h6v1h-6zM471 72h7v1h-7zM478 73h7v1h-7zM485 74h6v1h-6zM491 75h7v1h-7zM498 76h7v1h-7zM505 77h6v1h-6zM511 78h7v1h-7zM518 79h7v1h-7zM525 80h8v1h-8zM533 81h8v1h-8zM541 82h8v1h-8zM549 83h7v1h-7zM556 84h10v1h-10zM566 85h10v1h-10zM576 86h9v1h-9zM585 87h9v1h-9zM594 88h7v1h-7zM601 89h8v1h-8zM609 90h7v1h-7zM616 91h10v1h-10zM626 92h10v1h-10zM636 93h9v1h-9zM645 94h8v1h-8zM653 95h7v1h-7zM660 96h8v1h-8zM668 97h7v1h-7zM675 98h5v1h-5zM680 99h5v1h-5zM685 100h6v1h-6zM691 101h5v1h-5zM696 102h5v1h-5zM701 103h6v1h-6zM707 104h5v1h-5zM712 105h5v1h-5zM717 106h6v1h-6zM723 107h5v1h-5zM728 108h6v1h-6zM734 109h5v1h-5zM739 110h6v1h-6zM745 111h5v1h-5zM750 112h2v1h-2z" fill="#ff4500"/>
<path d="M0 91h241v-1h240v-1h241v-1h240v2h-240v1h-241v1h-240v1h-241z" fill="#ffd200"/>
<rect x="0" y="176" width="962" height="1" fill="#ff0000"/>
<text x="3.7" y="244.6" textLength="65.5" fill="#fff" stroke="#fff" stroke-width="0.15" shape-rendering="auto" text-rendering="geometricPrecision">ATR(14) 0.0693</text>
<path d="M0 251h17v1h-17zM17 250h1v1h-1zM18 249h2v1h-2zM20 248h6v1h-6zM26 247h6v1h-6zM32 246h6v1h-6zM38 245h7v1h-7zM45 244h15v1h-15zM60 243h4v1h-4zM64 242h3v1h-3zM67 241h2v1h-2zM69 240h3v1h-3zM72 239h4v1h-4zM76 238h7v1h-7zM83 239h3v1h-3zM86 240h3v1h-3zM89 241h5v1h-5zM94 242h5v1h-5zM99 243h7v1h-7zM106 244h6v1h-6zM112 245h8v1h-8zM120 246h8v1h-8zM128 247h2v1h-2zM130 248h2v1h-2zM132 249h2v1h-2zM134 250h4v1h-4zM138 251h5v1h-5zM143 252h5v1h-5zM148 253h8v1h-8zM156 254h12v1h-12zM168 255h3v1h-3zM171 256h3v1h-3zM174 257h3v1h-3zM177 258h1v1h-1zM178 259h2v1h-2zM180 260h2v1h-2zM182 261h2v1h-2zM184 262h2v1h-2zM186 263h2v1h-2zM188 264h2v1h-2zM190 265h15v1h-15zM205 264h15v1h-15zM220 263h4v1h-4zM224 262h3v1h-3zM227 261h4v1h-4zM231 260h3v1h-3zM234 259h3v1h-3zM237 258h2v1h-2zM239 257h4v1h-4zM243 256h4v1h-4zM247 255h4v1h-4zM251 254h4v1h-4zM255 253h6v1h-6zM261 252h7v1h-7zM268 251h10v1h-10zM278 250h11v1h-11zM289 249h16v1h-16zM305 248h2v1h-2zM307 247h2v1h-2zM309 246h1v1h-1zM310 245h2v1h-2zM312 244h2v1h-2zM314 243h2v1h-2zM316 242h1v1h-1zM317 241h2v1h-2zM319 240h2v1h-2zM321 239h4v1h-4zM325 238h5v1h-5zM330 237h4v1h-4zM334 236h5v1h-5zM339 237h6v1h-6zM345 238h3v1h-3zM348 239h6v1h-6zM354 238h3v1h-3zM357 237h2v1h-2zM359 236h16v1h-16zM375 237h7v1h-7zM382 238h7v1h-7zM389 239h9v1h-9zM398 238h12v1h-12zM410 237h2v1h-2zM412 236h2v1h-2zM414 235h3v1h-3zM417 236h2v1h-2zM419 237h1v1h-1zM420 238h2v1h-2zM422 239h1v1h-1zM423 240h1v1h-1zM424 241h2v1h-2zM426 242h3v1h-3zM429 243h2v1h-2zM431 244h2v1h-2zM433 245h3v1h-3zM436 246h3v1h-3zM439 247h3v1h-3zM442 248h3v1h-3zM445 249h3v1h-3zM448 250h2v1h-2zM450 249h6v1h-6zM456 248h3v1h-3zM459 247h3v1h-3zM462 246h4v1h-4zM466 247h3v1h-3zM469 248h9v1h-9zM478 247h3v1h-3zM481 248h5v1h-5zM486 249h5v1h-5zM491 248h4v1h-4zM495 247h2v1h-2zM497 246h1v1h-1zM498 245h1v1h-1zM499 244h1v1h-1zM500 243h1v1h-1zM501 242h2v1h-2zM503 241h1v1h-1zM504 240h5v1h-5zM509 241h3v1h-3zM512 242h1v1h-1zM513 241h3v1h-3zM516 240h11v1h-11zM527 241h2v1h-2zM529 240h3v1h-3zM532 239h2v1h-2zM534 238h11v1h-11zM545 237h2v1h-2zM547 236h2v1h-2zM549 235h2v1h-2zM551 234h15v1h-15zM566 235h4v1h-4zM570 236h2v1h-2zM572 237h2v1h-2zM574 238h2v1h-2zM576 239h2v1h-2zM578 240h2v1h-2zM580 241h3v1h-3zM583 242h21v1h-21zM604 243h3v1h-3zM607 244h2v1h-2zM609 245h2v1h-2zM611 246h1v1h-1zM612 247h2v1h-2zM614 248h1v1h-1zM615 249h2v1h-2zM617 250h1v1h-1zM618 249h13v1h-13zM631 250h13v1h-13zM644 251h3v1h-3zM647 252h10v1h-10zM657 253h2v1h-2zM659 254h1v1h-1zM660 255h2v1h-2zM662 256h2v1h-2zM664 257h3v1h-3zM667 256h3v1h-3zM670 255h15v1h-15zM685 254h3v1h-3zM688 253h3v1h-3zM691 252h3v1h-3zM694 251h6v1h-6zM700 252h8v1h-8zM708 253h12v1h-12zM720 252h10v1h-10zM730 253h9v1h-9zM739 252h7v1h-7zM746 253h3v1h-3zM749 254h2v1h-2zM751 255h2v1h-2z" fill="#1e90ff"/>
<rect x="0" y="5" width="963" height="1" fill="#fff"/>
<rect x="962" y="5" width="1" height="225" fill="#fff"/>
<rect x="0" y="229" width="963" height="1" fill="#fff"/>
<rect x="0" y="230" width="963" height="1" fill="#000"/>
<rect x="0" y="231" width="963" height="1" fill="#fff"/>
<rect x="962" y="231" width="1" height="38" fill="#fff"/>
<rect x="0" y="268" width="963" height="1" fill="#fff"/>
<rect x="963" y="15" width="2" height="1" fill="#fff"/>
<rect x="963" y="49" width="2" height="1" fill="#fff"/>
<rect x="963" y="83" width="2" height="1" fill="#fff"/>
<rect x="963" y="118" width="2" height="1" fill="#fff"/>
<rect x="963" y="152" width="2" height="1" fill="#fff"/>
<rect x="963" y="186" width="2" height="1" fill="#fff"/>
<rect x="963" y="220" width="2" height="1" fill="#fff"/>
<rect x="963" y="233" width="1" height="1" fill="#fff"/><rect x="963" y="267" width="1" height="1" fill="#fff"/>
<rect x="0" y="269" width="1" height="2" fill="#fff"/>
<rect x="64" y="269" width="1" height="2" fill="#fff"/>
<rect x="128" y="269" width="1" height="2" fill="#fff"/>
<rect x="192" y="269" width="1" height="2" fill="#fff"/>
<rect x="256" y="269" width="1" height="2" fill="#fff"/>
<rect x="320" y="269" width="1" height="2" fill="#fff"/>
<rect x="384" y="269" width="1" height="2" fill="#fff"/>
<rect x="448" y="269" width="1" height="2" fill="#fff"/>
<rect x="512" y="269" width="1" height="2" fill="#fff"/>
<rect x="576" y="269" width="1" height="2" fill="#fff"/>
<rect x="640" y="269" width="1" height="2" fill="#fff"/>
<rect x="704" y="269" width="1" height="2" fill="#fff"/>
<g fill="#fff" stroke="#fff" stroke-width="0.15" shape-rendering="auto" text-rendering="geometricPrecision">
<text x="910" y="17.5" textLength="33.5">trampita</text>
<text x="-0.7" y="280.6" textLength="45.5">1 Dec 2008</text>
<text x="63.3" y="280.6" textLength="49.3">1 Dec 17:35</text>
<text x="127.3" y="280.6" textLength="49.3">1 Dec 17:43</text>
<text x="191.3" y="280.6" textLength="49.3">1 Dec 17:51</text>
<text x="255.3" y="280.6" textLength="49.3">1 Dec 17:59</text>
<text x="319.3" y="280.6" textLength="49.3">1 Dec 18:07</text>
<text x="383.3" y="280.6" textLength="49.3">1 Dec 18:15</text>
<text x="447.3" y="280.6" textLength="49.3">1 Dec 18:23</text>
<text x="511.3" y="280.6" textLength="49.3">1 Dec 18:31</text>
<text x="575.3" y="280.6" textLength="49.3">1 Dec 18:39</text>
<text x="639.3" y="280.6" textLength="49.3">1 Dec 18:47</text>
<text x="703.3" y="280.6" textLength="49.3">1 Dec 18:55</text>
<text x="968.5" y="18.2">118.65</text>
<text x="968.5" y="52.2">118.45</text>
<text x="968.5" y="86.2">118.25</text>
<text x="968.5" y="121.2">118.05</text>
<text x="968.5" y="155.2">117.85</text>
<text x="968.5" y="189.2">117.65</text>
<text x="968.5" y="223.2">117.45</text>
<text x="966" y="241.6">0.1028</text><text x="966" y="264.2">0.0435</text>
</g>
<rect x="965" y="170" width="16" height="7" fill="#ff0000"/>
<rect x="965" y="177" width="16" height="10" fill="#fff"/>
<g shape-rendering="auto"><text x="968.5" y="179.5" fill="#000" style="clip-path:inset(0)">117.71</text></g>
<rect x="965" y="177" width="16" height="10" fill="#fff"/>
<g shape-rendering="auto"><text x="968.5" y="185.2" fill="#000">117.67</text></g>
<g shape-rendering="auto"><path d="M950.3 13.6h1.8l3.2 3.8h1.9M957.2 13.6h-1.8l-3.2 3.8h-1.9" stroke="#fff" stroke-width="1.25" fill="none"/></g>
</svg>
<div class="tabs">
<span class="tb" style="left:8.8px;transform:scaleX(0.912)">GBPJPY,M5</span>
<span class="tb" style="left:86.2px;transform:scaleX(0.955)">SPA35,H1</span>
<span class="tb" style="left:155.8px;transform:scaleX(0.957)">US30,M5</span>
<span class="tb" style="left:222.1px;transform:scaleX(0.977)">OIL,Daily</span>
<span class="tb" style="left:289.4px;transform:scaleX(0.920)">GOLD,Daily</span>
<span class="tb" style="left:364.7px;transform:scaleX(0.901)">USDMXN,H1</span>
<span class="tb" style="left:444.8px;transform:scaleX(0.928)">USDCAD,M30</span>
<span class="tb" style="left:532.2px;transform:scaleX(0.905)">GBPUSD,M30</span>
<span class="tb" style="left:616.3px;transform:scaleX(0.928)">EURGBP,M5</span>
<span class="tb" style="left:695.8px;transform:scaleX(0.932)">EURUSD,Weekly</span>
<span class="tb" style="left:795.7px;transform:scaleX(0.912)">EURJPY,M1</span>
<i class="sp" style="left:75px"></i>
<i class="sp" style="left:147px"></i>
<i class="sp" style="left:211px"></i>
<i class="sp" style="left:279px"></i>
<i class="sp" style="left:356px"></i>
<i class="sp" style="left:435px"></i>
<i class="sp" style="left:523px"></i>
<i class="sp" style="left:608px"></i>
<i class="sp" style="left:687px"></i>
<i class="sp" style="left:787px"></i>
<div class="act"><span class="tb" style="left:9.4px;color:#000;-webkit-text-stroke:0.2px #000;transform:scaleX(0.912)">EURJPY,M1</span></div>
<i class="arr"></i>
</div>
<div class="hl"></div>
<div class="side"></div><div class="cx"><svg width="7" height="7" viewBox="0 0 7 7"><path d="M0.5 1L5 5.5M5 1L0.5 5.5" stroke="#000" stroke-width="1.6"/></svg></div>
<div class="hd">
<span style="left:8.8px;transform:scaleX(1.007);transform-origin:0 0">Orden</span>
<span style="right:744.2px;transform:scaleX(0.937);transform-origin:100% 0">Tiempo</span>
<span style="right:678.5px;transform:scaleX(0.938);transform-origin:100% 0">Tipo</span>
<span style="left:306.9px;transform:scaleX(1.030);transform-origin:0 0">Volu...</span>
<span style="right:559.3px;transform:scaleX(0.942);transform-origin:100% 0">Símbolo</span>
<span style="right:493.2px;transform:scaleX(0.952);transform-origin:100% 0">Precio</span>
<span style="right:427.1px;transform:scaleX(0.946);transform-origin:100% 0">S / L</span>
<span style="right:361.1px;transform:scaleX(0.964);transform-origin:100% 0">T / P</span>
<span style="left:704.5px;transform:scaleX(0.937);transform-origin:0 0">Tiempo</span>
<span style="right:149.5px;transform:scaleX(0.952);transform-origin:100% 0">Precio</span>
<span style="right:84.5px;transform:scaleX(0.915);transform-origin:100% 0">Swap</span>
<span style="right:4.5px;transform:scaleX(0.955);transform-origin:100% 0">Beneficios</span>
<i style="left:85px"></i>
<i style="left:231px"></i>
<i style="left:297px"></i>
<i style="left:350px"></i>
<i style="left:416px"></i>
<i style="left:482px"></i>
<i style="left:548px"></i>
<i style="left:614px"></i>
<i style="left:760px"></i>
<i style="left:826px"></i>
<i style="left:892px"></i>
<svg style="position:absolute;left:749px;top:6px" width="9" height="8" viewBox="0 0 9 8"><path d="M0.5 7.5L4.5 0.5" stroke="#aca899"/><path d="M4.5 0.5L8.5 7.5H0.5" stroke="#fff" fill="none"/></svg>
</div>
<div class="rw" style="top:333px;background:#fff">
<b class="pk"></b>
<svg class="ic" width="16" height="18" viewBox="0 0 16 18"><defs><linearGradient id="pg" x1="0" y1="0" x2="0.6" y2="1"><stop offset="0.45" stop-color="#fff"/><stop offset="1" stop-color="#d4d4d4"/></linearGradient></defs><path d="M1.5 1.5h6l3.5 3.5v9a.5 .5 0 0 1-.5 .5h-9a1 1 0 0 1-1-1v-11a1 1 0 0 1 1-1z" fill="url(#pg)" stroke="#6a6a6a" stroke-width="1"/><path d="M11 5v9.5h-9.5" fill="none" stroke="#3a3a3a" stroke-width="1"/><path d="M7.5 1.5v3.5h3.5" fill="#f4f4f4" stroke="#6a6a6a" stroke-width="1"/><circle cx="10.6" cy="12.4" r="3.1" fill="#ee3a0c" stroke="#a52a0a" stroke-width="0.7"/><circle cx="9.7" cy="11.3" r="1" fill="#ff9a70"/></svg>
<span style="left:25.2px;letter-spacing:-0.15px">10082873</span>
<span style="right:742.5px">2008.12.01 17:05</span>
<span style="right:676px">sell</span>
<span style="right:623px">0.20</span>
<span style="right:557.5px">eurjpy</span>
<span style="right:491px">118.36</span>
<span style="right:425.5px">118.34</span>
<span style="right:359.5px">0.00</span>
<span style="right:213.70000000000005px">2008.12.01 17:11</span>
<span style="right:147.5px">118.34</span>
<span style="right:81.5px">0.00</span>
<span style="right:3px">3.38</span>
</div>
<div class="rw" style="top:353px;background:#ebebeb">
<svg class="ic" width="16" height="18" viewBox="0 0 16 18"><defs><linearGradient id="pg" x1="0" y1="0" x2="0.6" y2="1"><stop offset="0.45" stop-color="#fff"/><stop offset="1" stop-color="#d4d4d4"/></linearGradient></defs><path d="M1.5 1.5h6l3.5 3.5v9a.5 .5 0 0 1-.5 .5h-9a1 1 0 0 1-1-1v-11a1 1 0 0 1 1-1z" fill="url(#pg)" stroke="#6a6a6a" stroke-width="1"/><path d="M11 5v9.5h-9.5" fill="none" stroke="#3a3a3a" stroke-width="1"/><path d="M7.5 1.5v3.5h3.5" fill="#f4f4f4" stroke="#6a6a6a" stroke-width="1"/><circle cx="10.6" cy="12.4" r="3.1" fill="#ee3a0c" stroke="#a52a0a" stroke-width="0.7"/><circle cx="9.7" cy="11.3" r="1" fill="#ff9a70"/></svg>
<span style="left:25.2px;letter-spacing:-0.15px">10083124</span>
<span style="right:742.5px">2008.12.01 17:14</span>
<span style="right:676px">sell</span>
<span style="right:623px">0.20</span>
<span style="right:557.5px">eurjpy</span>
<span style="right:491px">118.38</span>
<span style="right:425.5px">0.00</span>
<span style="right:359.5px">0.00</span>
<span style="right:213.70000000000005px">2008.12.01 17:24</span>
<span style="right:147.5px">118.27</span>
<span style="right:81.5px">0.00</span>
<span style="right:3px">18.60</span>
</div>
<div class="rw" style="top:373px;background:#fff">
<svg class="ic" width="16" height="18" viewBox="0 0 16 18"><defs><linearGradient id="pg" x1="0" y1="0" x2="0.6" y2="1"><stop offset="0.45" stop-color="#fff"/><stop offset="1" stop-color="#d4d4d4"/></linearGradient></defs><path d="M1.5 1.5h6l3.5 3.5v9a.5 .5 0 0 1-.5 .5h-9a1 1 0 0 1-1-1v-11a1 1 0 0 1 1-1z" fill="url(#pg)" stroke="#6a6a6a" stroke-width="1"/><path d="M11 5v9.5h-9.5" fill="none" stroke="#3a3a3a" stroke-width="1"/><path d="M7.5 1.5v3.5h3.5" fill="#f4f4f4" stroke="#6a6a6a" stroke-width="1"/><circle cx="10.6" cy="12.4" r="3.1" fill="#1b8ae8" stroke="#0d5aa8" stroke-width="0.7"/><circle cx="9.7" cy="11.3" r="1" fill="#8fd0ff"/></svg>
<span style="left:25.2px;letter-spacing:-0.15px">10082048</span>
<span style="right:742.5px">2008.12.01 16:54</span>
<span style="right:676px">buy</span>
<span style="right:623px">0.10</span>
<span style="right:557.5px">eurjpy</span>
<span style="right:491px">118.43</span>
<span style="right:425.5px">0.00</span>
<span style="right:359.5px">0.00</span>
<span style="right:213.70000000000005px">2008.12.01 18:06</span>
<span style="right:147.5px">118.48</span>
<span style="right:81.5px">0.00</span>
<span style="right:3px">4.22</span>
</div>
<div class="rw" style="top:393px;background:#ebebeb">
<svg class="ic" width="16" height="18" viewBox="0 0 16 18"><defs><linearGradient id="pg" x1="0" y1="0" x2="0.6" y2="1"><stop offset="0.45" stop-color="#fff"/><stop offset="1" stop-color="#d4d4d4"/></linearGradient></defs><path d="M1.5 1.5h6l3.5 3.5v9a.5 .5 0 0 1-.5 .5h-9a1 1 0 0 1-1-1v-11a1 1 0 0 1 1-1z" fill="url(#pg)" stroke="#6a6a6a" stroke-width="1"/><path d="M11 5v9.5h-9.5" fill="none" stroke="#3a3a3a" stroke-width="1"/><path d="M7.5 1.5v3.5h3.5" fill="#f4f4f4" stroke="#6a6a6a" stroke-width="1"/><circle cx="10.6" cy="12.4" r="3.1" fill="#ee3a0c" stroke="#a52a0a" stroke-width="0.7"/><circle cx="9.7" cy="11.3" r="1" fill="#ff9a70"/></svg>
<span style="left:25.2px;letter-spacing:-0.15px">10084155</span>
<span style="right:742.5px">2008.12.01 17:40</span>
<span style="right:676px">sell</span>
<span style="right:623px">0.10</span>
<span style="right:557.5px">eurjpy</span>
<span style="right:491px">118.37</span>
<span style="right:425.5px">0.00</span>
<span style="right:359.5px">0.00</span>
<span style="right:213.70000000000005px">2008.12.01 18:09</span>
<span style="right:147.5px">118.24</span>
<span style="right:81.5px">0.00</span>
<span style="right:3px">10.99</span>
</div>
<div class="rw" style="top:413px;background:#fff">
<svg class="ic" width="16" height="18" viewBox="0 0 16 18"><defs><linearGradient id="pg" x1="0" y1="0" x2="0.6" y2="1"><stop offset="0.45" stop-color="#fff"/><stop offset="1" stop-color="#d4d4d4"/></linearGradient></defs><path d="M1.5 1.5h6l3.5 3.5v9a.5 .5 0 0 1-.5 .5h-9a1 1 0 0 1-1-1v-11a1 1 0 0 1 1-1z" fill="url(#pg)" stroke="#6a6a6a" stroke-width="1"/><path d="M11 5v9.5h-9.5" fill="none" stroke="#3a3a3a" stroke-width="1"/><path d="M7.5 1.5v3.5h3.5" fill="#f4f4f4" stroke="#6a6a6a" stroke-width="1"/><circle cx="10.6" cy="12.4" r="3.1" fill="#ee3a0c" stroke="#a52a0a" stroke-width="0.7"/><circle cx="9.7" cy="11.3" r="1" fill="#ff9a70"/></svg>
<span style="left:25.2px;letter-spacing:-0.15px">10086204</span>
<span style="right:742.5px">2008.12.01 18:29</span>
<span style="right:676px">sell</span>
<span style="right:623px">0.10</span>
<span style="right:557.5px">eurjpy</span>
<span style="right:491px">117.89</span>
<span style="right:425.5px">0.00</span>
<span style="right:359.5px">0.00</span>
<span style="right:213.70000000000005px">2008.12.01 18:31</span>
<span style="right:147.5px">117.76</span>
<span style="right:81.5px">0.00</span>
<span style="right:3px">11.04</span>
</div>
<div class="rw" style="top:433px;background:#ebebeb">
<b class="pk"></b>
<svg class="ic" width="16" height="18" viewBox="0 0 16 18"><defs><linearGradient id="pg" x1="0" y1="0" x2="0.6" y2="1"><stop offset="0.45" stop-color="#fff"/><stop offset="1" stop-color="#d4d4d4"/></linearGradient></defs><path d="M1.5 1.5h6l3.5 3.5v9a.5 .5 0 0 1-.5 .5h-9a1 1 0 0 1-1-1v-11a1 1 0 0 1 1-1z" fill="url(#pg)" stroke="#6a6a6a" stroke-width="1"/><path d="M11 5v9.5h-9.5" fill="none" stroke="#3a3a3a" stroke-width="1"/><path d="M7.5 1.5v3.5h3.5" fill="#f4f4f4" stroke="#6a6a6a" stroke-width="1"/><circle cx="10.6" cy="12.4" r="3.1" fill="#ee3a0c" stroke="#a52a0a" stroke-width="0.7"/><circle cx="9.7" cy="11.3" r="1" fill="#ff9a70"/></svg>
<span style="left:25.2px;letter-spacing:-0.15px">10086301</span>
<span style="right:742.5px">2008.12.01 18:29</span>
<span style="right:676px">sell</span>
<span style="right:623px">0.40</span>
<span style="right:557.5px">eurjpy</span>
<span style="right:491px">117.89</span>
<span style="right:425.5px">117.85</span>
<span style="right:359.5px">0.00</span>
<span style="right:213.70000000000005px">2008.12.01 18:33</span>
<span style="right:147.5px">117.85</span>
<span style="right:81.5px">0.00</span>
<span style="right:3px">13.58</span>
</div>
<div class="rw" style="top:453px;background:#fff">
<svg class="ic" width="16" height="18" viewBox="0 0 16 18"><defs><linearGradient id="pg" x1="0" y1="0" x2="0.6" y2="1"><stop offset="0.45" stop-color="#fff"/><stop offset="1" stop-color="#d4d4d4"/></linearGradient></defs><path d="M1.5 1.5h6l3.5 3.5v9a.5 .5 0 0 1-.5 .5h-9a1 1 0 0 1-1-1v-11a1 1 0 0 1 1-1z" fill="url(#pg)" stroke="#6a6a6a" stroke-width="1"/><path d="M11 5v9.5h-9.5" fill="none" stroke="#3a3a3a" stroke-width="1"/><path d="M7.5 1.5v3.5h3.5" fill="#f4f4f4" stroke="#6a6a6a" stroke-width="1"/><circle cx="10.6" cy="12.4" r="3.1" fill="#ee3a0c" stroke="#a52a0a" stroke-width="0.7"/><circle cx="9.7" cy="11.3" r="1" fill="#ff9a70"/></svg>
<span style="left:25.2px;letter-spacing:-0.15px">10086468</span>
<span style="right:742.5px">2008.12.01 18:35</span>
<span style="right:676px">sell</span>
<span style="right:623px">0.10</span>
<span style="right:557.5px">eurjpy</span>
<span style="right:491px">117.85</span>
<span style="right:425.5px">0.00</span>
<span style="right:359.5px">0.00</span>
<span style="right:213.70000000000005px">2008.12.01 18:37</span>
<span style="right:147.5px">117.79</span>
<span style="right:81.5px">0.00</span>
<span style="right:3px">5.09</span>
</div>
<div class="rw" style="top:473px;background:#ebebeb">
<svg class="ic" width="16" height="18" viewBox="0 0 16 18"><defs><linearGradient id="pg" x1="0" y1="0" x2="0.6" y2="1"><stop offset="0.45" stop-color="#fff"/><stop offset="1" stop-color="#d4d4d4"/></linearGradient></defs><path d="M1.5 1.5h6l3.5 3.5v9a.5 .5 0 0 1-.5 .5h-9a1 1 0 0 1-1-1v-11a1 1 0 0 1 1-1z" fill="url(#pg)" stroke="#6a6a6a" stroke-width="1"/><path d="M11 5v9.5h-9.5" fill="none" stroke="#3a3a3a" stroke-width="1"/><path d="M7.5 1.5v3.5h3.5" fill="#f4f4f4" stroke="#6a6a6a" stroke-width="1"/><circle cx="10.6" cy="12.4" r="3.1" fill="#ee3a0c" stroke="#a52a0a" stroke-width="0.7"/><circle cx="9.7" cy="11.3" r="1" fill="#ff9a70"/></svg>
<span style="left:25.2px;letter-spacing:-0.15px">10086899</span>
<span style="right:742.5px">2008.12.01 18:47</span>
<span style="right:676px">sell</span>
<span style="right:623px">0.10</span>
<span style="right:557.5px">eurjpy</span>
<span style="right:491px">117.72</span>
<span style="right:425.5px">0.00</span>
<span style="right:359.5px">0.00</span>
<span style="right:213.70000000000005px">2008.12.01 18:51</span>
<span style="right:147.5px">117.69</span>
<span style="right:81.5px">0.00</span>
<span style="right:3px">2.55</span>
</div>
<div class="rw" style="top:493px;background:#fff">
<svg class="ic" width="16" height="18" viewBox="0 0 16 18"><defs><linearGradient id="pg" x1="0" y1="0" x2="0.6" y2="1"><stop offset="0.45" stop-color="#fff"/><stop offset="1" stop-color="#d4d4d4"/></linearGradient></defs><path d="M1.5 1.5h6l3.5 3.5v9a.5 .5 0 0 1-.5 .5h-9a1 1 0 0 1-1-1v-11a1 1 0 0 1 1-1z" fill="url(#pg)" stroke="#6a6a6a" stroke-width="1"/><path d="M11 5v9.5h-9.5" fill="none" stroke="#3a3a3a" stroke-width="1"/><path d="M7.5 1.5v3.5h3.5" fill="#f4f4f4" stroke="#6a6a6a" stroke-width="1"/><circle cx="10.6" cy="12.4" r="3.1" fill="#ee3a0c" stroke="#a52a0a" stroke-width="0.7"/><circle cx="9.7" cy="11.3" r="1" fill="#ff9a70"/></svg>
<span style="left:25.2px;letter-spacing:-0.15px">10087033</span>
<span style="right:742.5px">2008.12.01 18:47</span>
<span style="right:676px">sell</span>
<span style="right:623px">0.10</span>
<span style="right:557.5px">eurjpy</span>
<span style="right:491px">117.72</span>
<span style="right:425.5px">0.00</span>
<span style="right:359.5px">0.00</span>
<span style="right:213.70000000000005px">2008.12.01 18:53</span>
<span style="right:147.5px">117.55</span>
<span style="right:81.5px">0.00</span>
<span style="right:3px">14.46</span>
</div>
<div class="rw" style="top:513px;background:#ebebeb">
<svg class="ic" width="16" height="18" viewBox="0 0 16 18"><defs><linearGradient id="pg" x1="0" y1="0" x2="0.6" y2="1"><stop offset="0.45" stop-color="#fff"/><stop offset="1" stop-color="#d4d4d4"/></linearGradient></defs><path d="M1.5 1.5h6l3.5 3.5v9a.5 .5 0 0 1-.5 .5h-9a1 1 0 0 1-1-1v-11a1 1 0 0 1 1-1z" fill="url(#pg)" stroke="#6a6a6a" stroke-width="1"/><path d="M11 5v9.5h-9.5" fill="none" stroke="#3a3a3a" stroke-width="1"/><path d="M7.5 1.5v3.5h3.5" fill="#f4f4f4" stroke="#6a6a6a" stroke-width="1"/><circle cx="10.6" cy="12.4" r="3.1" fill="#ee3a0c" stroke="#a52a0a" stroke-width="0.7"/><circle cx="9.7" cy="11.3" r="1" fill="#ff9a70"/></svg>
<span style="left:25.2px;letter-spacing:-0.15px">10087124</span>
<span style="right:742.5px">2008.12.01 18:47</span>
<span style="right:676px">sell</span>
<span style="right:623px">0.10</span>
<span style="right:557.5px">eurjpy</span>
<span style="right:491px">117.72</span>
<span style="right:425.5px">0.00</span>
<span style="right:359.5px">0.00</span>
<span style="right:213.70000000000005px">2008.12.01 18:55</span>
<span style="right:147.5px">117.58</span>
<span style="right:81.5px">0.00</span>
<span style="right:3px">11.91</span>
</div>
<div class="rw" style="top:533px;background:#fff">
<svg class="ic" width="16" height="18" viewBox="0 0 16 18"><defs><linearGradient id="pg" x1="0" y1="0" x2="0.6" y2="1"><stop offset="0.45" stop-color="#fff"/><stop offset="1" stop-color="#d4d4d4"/></linearGradient></defs><path d="M1.5 1.5h6l3.5 3.5v9a.5 .5 0 0 1-.5 .5h-9a1 1 0 0 1-1-1v-11a1 1 0 0 1 1-1z" fill="url(#pg)" stroke="#6a6a6a" stroke-width="1"/><path d="M11 5v9.5h-9.5" fill="none" stroke="#3a3a3a" stroke-width="1"/><path d="M7.5 1.5v3.5h3.5" fill="#f4f4f4" stroke="#6a6a6a" stroke-width="1"/><circle cx="10.6" cy="12.4" r="3.1" fill="#ee3a0c" stroke="#a52a0a" stroke-width="0.7"/><circle cx="9.7" cy="11.3" r="1" fill="#ff9a70"/></svg>
<span style="left:25.2px;letter-spacing:-0.15px">10087198</span>
<span style="right:742.5px">2008.12.01 18:47</span>
<span style="right:676px">sell</span>
<span style="right:623px">0.10</span>
<span style="right:557.5px">eurjpy</span>
<span style="right:491px">117.72</span>
<span style="right:425.5px">0.00</span>
<span style="right:359.5px">0.00</span>
<span style="right:213.70000000000005px">2008.12.01 19:00</span>
<span style="right:147.5px">117.68</span>
<span style="right:81.5px">0.00</span>
<span style="right:3px">3.40</span>
</div>
<div class="rw" style="top:553px;background:#ebebeb">
<svg class="ic" width="16" height="18" viewBox="0 0 16 18"><defs><linearGradient id="pg" x1="0" y1="0" x2="0.6" y2="1"><stop offset="0.45" stop-color="#fff"/><stop offset="1" stop-color="#d4d4d4"/></linearGradient></defs><path d="M1.5 1.5h6l3.5 3.5v9a.5 .5 0 0 1-.5 .5h-9a1 1 0 0 1-1-1v-11a1 1 0 0 1 1-1z" fill="url(#pg)" stroke="#6a6a6a" stroke-width="1"/><path d="M11 5v9.5h-9.5" fill="none" stroke="#3a3a3a" stroke-width="1"/><path d="M7.5 1.5v3.5h3.5" fill="#f4f4f4" stroke="#6a6a6a" stroke-width="1"/><circle cx="10.6" cy="12.4" r="3.1" fill="#ee3a0c" stroke="#a52a0a" stroke-width="0.7"/><circle cx="9.7" cy="11.3" r="1" fill="#ff9a70"/></svg>
<span style="left:25.2px;letter-spacing:-0.15px">10087433</span>
<span style="right:742.5px">2008.12.01 18:56</span>
<span style="right:676px">sell</span>
<span style="right:623px">0.10</span>
<span style="right:557.5px">eurjpy</span>
<span style="right:491px">117.71</span>
<span style="right:425.5px">0.00</span>
<span style="right:359.5px">0.00</span>
<span style="right:213.70000000000005px">2008.12.01 19:02</span>
<span style="right:147.5px">117.66</span>
<span style="right:81.5px">0.00</span>
<span style="right:3px">2.10</span>
</div>
<i class="cl" style="left:95px"></i>
<i class="cl" style="left:241px"></i>
<i class="cl" style="left:307px"></i>
<i class="cl" style="left:360px"></i>
<i class="cl" style="left:426px"></i>
<i class="cl" style="left:492px"></i>
<i class="cl" style="left:558px"></i>
<i class="cl" style="left:624px"></i>
<i class="cl" style="left:770px"></i>
<i class="cl" style="left:836px"></i>
<i class="cl" style="left:902px"></i>
<i class="lb"></i>
</body></html>
